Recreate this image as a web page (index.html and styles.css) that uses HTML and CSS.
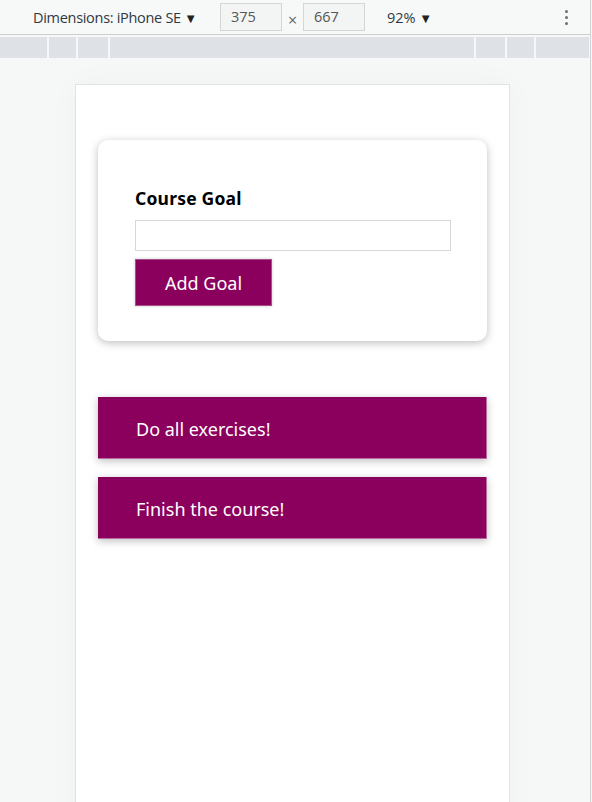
FILE: index.html
```html
<!DOCTYPE html>
<html>
<head>
<meta charset="utf-8">
<link rel="stylesheet" href="styles.css">
</head>
<body>
<div class="devtools">
  <div class="toolbar">
    <span class="dim">Dimensions: iPhone SE <span class="tri">▼</span></span>
    <span class="box">375</span>
    <span class="times">×</span>
    <span class="box">667</span>
    <span class="zoomv">92% <span class="tri">▼</span></span>
    <span class="kebab"><i></i><i></i><i></i></span>
  </div>
  <div class="ruler">
    <span class="seg s1"></span><span class="seg s2"></span><span class="seg s3"></span><span class="seg big"></span><span class="seg s4"></span><span class="seg s5"></span><span class="seg s6"></span>
  </div>
  <div class="viewport">
    <div class="device">
      <section class="card">
        <form class="form">
          <label class="label">Course Goal</label>
          <input class="input" type="text">
          <button class="btn" type="button">Add Goal</button>
        </form>
      </section>
      <ul class="goals">
        <li class="goal">Do all exercises!</li>
        <li class="goal">Finish the course!</li>
      </ul>
    </div>
  </div>
</div>
</body>
</html>
```
FILE: styles.css
```css
html, body {
  margin: 0;
  padding: 0;
  height: 100%;
  overflow: hidden;
}
body {
  background: #f6f7f7;
}
.devtools {
  width: 590px;
  height: 802px;
  border-right: 1px solid #cfd1d3;
  display: flex;
  flex-direction: column;
  font-family: "Open Sans", "Noto Sans", sans-serif;
}
.toolbar {
  height: 34px;
  border-bottom: 1px solid #cbcdd0;
  background: #f7f8f8;
  display: flex;
  align-items: center;
  font-size: 14.5px;
  color: #303942;
  box-sizing: content-box;
}
.dim { margin-left: 33px; width: 187px; letter-spacing: -0.3px; }
.tri { font-size: 13px; color: #222; }
.box {
  width: 50px;
  height: 26px;
  line-height: 26px;
  border: 1px solid #d4d5d7;
  background: #f3f4f4;
  color: #555;
  padding-left: 10px;
  box-sizing: content-box;
}
.times { width: 21px; text-align: center; color: #666; margin-top: 6px; font-size: 16px; }
.zoomv { margin-left: 22px; }
.kebab {
  margin-left: auto;
  margin-right: 22px;
  display: flex;
  flex-direction: column;
  gap: 3px;
}
.kebab i {
  display: block;
  width: 3px;
  height: 3px;
  background: #6e6e6e;
  border-radius: 50%;
}
.ruler {
  margin-top: 2px;
  height: 21px;
  display: flex;
  gap: 2px;
  margin-right: 1px;
}
.seg { background: #dee1e6; height: 100%; }
.s1 { width: 47px; }
.s2 { width: 27px; }
.s3 { width: 30px; }
.big { flex: 1; }
.s4 { width: 29px; }
.s5 { width: 27px; }
.s6 { width: 53px; }
.viewport {
  flex: 1;
  padding-top: 26px;
  overflow: hidden;
}
.device {
  margin-left: 75px;
  width: 389px;
  height: 760px;
  background: #fff;
  border: 1px solid #e1e2e3;
  border-bottom: none;
  padding: 55px 22px 0;
  box-shadow: 0 0 30px rgba(0,0,0,0.03);
  font-family: "Noto Sans", "Open Sans", sans-serif;
}
.card {
  background: #fff;
  border-radius: 10px;
  box-shadow: 0 2px 8px rgba(0,0,0,0.26);
  padding: 46px 37px 35px;
}
.form {
  margin: 0;
  display: flex;
  flex-direction: column;
  align-items: flex-start;
}
.label {
  font-weight: bold;
  font-size: 17.5px;
  line-height: 25px;
  letter-spacing: 0.2px;
  color: #000;
}
.input {
  margin-top: 9px;
  width: 316px;
  height: 31px;
  box-sizing: border-box;
  border: 1px solid #d7d7d7;
  outline: none;
  padding: 0 6px;
}
.btn {
  margin-top: 8px;
  width: 137px;
  height: 47px;
  background: #8b005d;
  border: 1px solid #a8508a;
  color: #fff;
  font-family: "Noto Sans", "Open Sans", sans-serif;
  font-size: 18px;
  padding: 0;
  box-shadow: 0 0 3px rgba(0,0,0,0.2);
}
.goals {
  list-style: none;
  margin: 56px 0 0;
  padding: 0;
  display: flex;
  flex-direction: column;
  gap: 18px;
}
.goal {
  height: 62px;
  box-sizing: border-box;
  background: #8b005d;
  color: #fff;
  font-size: 18px;
  display: flex;
  align-items: center;
  padding-left: 38px;
  padding-top: 2px;
  border-right: 1px solid #b86aa0;
  border-bottom: 1px solid #b86aa0;
  box-shadow: 0 2px 8px rgba(0,0,0,0.26);
}
```
